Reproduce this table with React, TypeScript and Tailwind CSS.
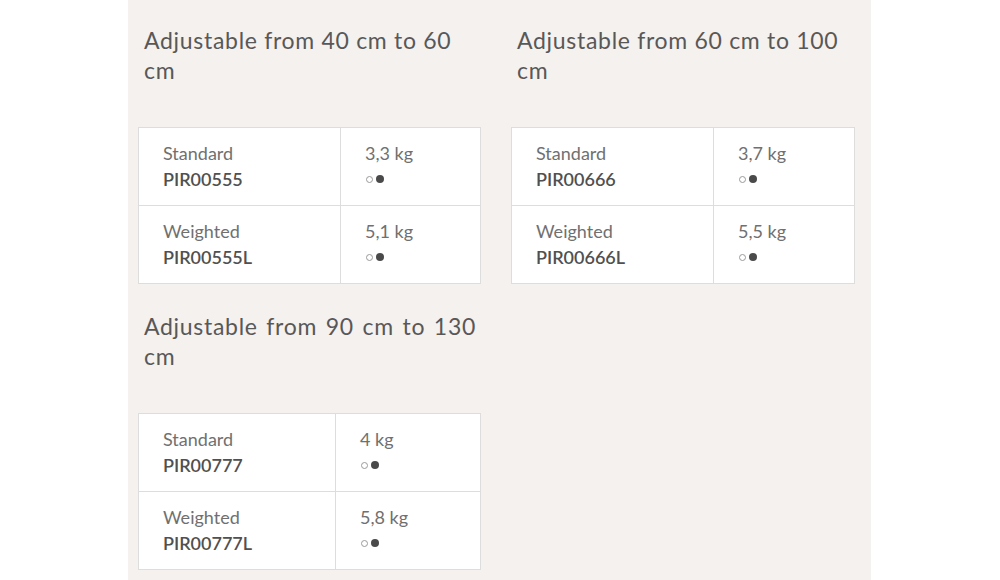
const blocks = [
  {
    title: 'Adjustable from 40 cm to 60 cm',
    justify: false,
    firstCol: 'w-[202px]',
    rows: [
      { label: 'Standard', code: 'PIR00555', weight: '3,3 kg' },
      { label: 'Weighted', code: 'PIR00555L', weight: '5,1 kg' },
    ],
  },
  {
    title: 'Adjustable from 60 cm to 100 cm',
    justify: false,
    firstCol: 'w-[202px]',
    rows: [
      { label: 'Standard', code: 'PIR00666', weight: '3,7 kg' },
      { label: 'Weighted', code: 'PIR00666L', weight: '5,5 kg' },
    ],
  },
  {
    title: 'Adjustable from 90 cm to 130 cm',
    justify: true,
    firstCol: 'w-[197px]',
    rows: [
      { label: 'Standard', code: 'PIR00777', weight: '4 kg' },
      { label: 'Weighted', code: 'PIR00777L', weight: '5,8 kg' },
    ],
  },
];

function Dots() {
  return (
    <div className="flex h-[26px] items-center gap-[3px] pl-[1px]">
      <span className="h-[7px] w-[7px] rounded-full border border-[#9a9a9a] bg-white" />
      <span className="h-[8px] w-[8px] rounded-full bg-[#4a4a4a]" />
    </div>
  );
}

function SizeBlock({ block }: { block: (typeof blocks)[number] }) {
  return (
    <div className="mb-[2px]">
      <h2
        className={`w-[338px] pl-[6px] pt-[25px] text-[23px] leading-[30px] font-normal tracking-[0.7px] text-[#585858] ${
          block.justify ? 'text-justify' : ''
        }`}
      >
        {block.title}
      </h2>
      <table className="mt-[42px] w-full border-collapse border border-[#dddddd] bg-white text-[18px] leading-[26px]">
        <tbody>
          {block.rows.map((row) => (
            <tr key={row.code} className="border-b border-[#dddddd]">
              <td className={`${block.firstCol} border-r border-[#dddddd] pt-[12px] pb-[13px] pl-[24px] align-top`}>
                <div className="text-[#707070]">{row.label}</div>
                <div className="font-semibold text-[#505050]">{row.code}</div>
              </td>
              <td className="pt-[12px] pb-[13px] pl-[24px] align-top">
                <div className="text-[#707070]">{row.weight}</div>
                <Dots />
              </td>
            </tr>
          ))}
        </tbody>
      </table>
    </div>
  );
}

export default function App() {
  return (
    <div className="h-[580px] w-[1000px] overflow-hidden bg-white font-['Lato',sans-serif]">
      <div className="ml-[128px] h-full w-[743px] bg-[#f5f1ee] pl-[10px]">
        <div className="grid grid-cols-[343px_344px] gap-x-[30px]">
          {blocks.map((block) => (
            <SizeBlock key={block.title} block={block} />
          ))}
        </div>
      </div>
    </div>
  );
}
